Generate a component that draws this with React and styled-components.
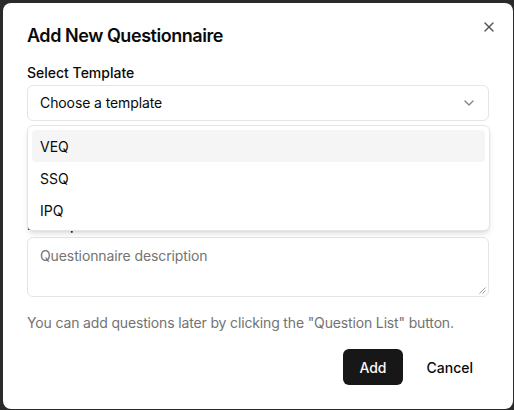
import React from "react";
import styled, { createGlobalStyle } from "styled-components";

const Global = createGlobalStyle`
  html, body { margin: 0; padding: 0; background: #2a2a2a; }
  body { font-family: Inter, "Noto Sans", sans-serif; -webkit-font-smoothing: antialiased; }
  * { box-sizing: border-box; }
`;

const Dialog = styled.div`
  position: relative;
  margin: 3px 1px 1px 3px;
  width: 510px;
  height: 406px;
  background: #ffffff;
  border-radius: 8px;
  padding: 24px;
  display: flex;
  flex-direction: column;
  color: #0a0a0a;
`;

const Title = styled.h2`
  margin: 0;
  font-size: 18px;
  line-height: 18px;
  font-weight: 600;
  letter-spacing: -0.025em;
`;

const Close = styled.button`
  position: absolute;
  top: 16px;
  right: 16px;
  width: 16px;
  height: 16px;
  padding: 0;
  border: 0;
  background: none;
  color: #0a0a0a;
  opacity: 0.7;
  display: flex;
`;

const Fields = styled.div`
  margin-top: 21px;
  display: flex;
  flex-direction: column;
  gap: 21px;
`;

const Field = styled.div`
  position: relative;
  display: flex;
  flex-direction: column;
  gap: 5px;
`;

const Label = styled.label`
  font-size: 14px;
  line-height: 14px;
  font-weight: 500;
  color: #0a0a0a;
`;

const Control = styled.div`
  height: ${(p) => p.$h || 36}px;
  border: 1px solid #e5e5e5;
  border-radius: 6px;
  display: flex;
  align-items: ${(p) => (p.$area ? "flex-start" : "center")};
  justify-content: space-between;
  padding: ${(p) => (p.$area ? "8px 12px" : "0 11px 0 12px")};
  font-size: 14px;
  line-height: 20px;
  letter-spacing: -0.1px;
  color: ${(p) => (p.$placeholder ? "#737373" : "#0a0a0a")};
  position: relative;
  background: #fff;
`;

const SelectWrap = styled.div`
  position: relative;
`;

const Menu = styled.div`
  position: absolute;
  top: calc(100% + 4px);
  left: 0;
  right: -1px;
  z-index: 5;
  background: #fff;
  border: 1px solid #e5e5e5;
  border-radius: 6px;
  padding: 4px;
  box-shadow: 0 4px 6px -1px rgba(0,0,0,0.1), 0 2px 4px -2px rgba(0,0,0,0.1);
`;

const Item = styled.div`
  height: 32px;
  display: flex;
  align-items: center;
  padding: 0 8px;
  border-radius: 4px;
  font-size: 14px;
  color: #0a0a0a;
  background: ${(p) => (p.$active ? "#f5f5f5" : "transparent")};
`;

const Resize = styled.svg`
  position: absolute;
  right: 2px;
  bottom: 2px;
`;

const Hint = styled.p`
  margin: 16px 0 0;
  font-size: 14px;
  line-height: 20px;
  letter-spacing: -0.15px;
  color: #737373;
`;

const Actions = styled.div`
  margin-top: 16px;
  display: flex;
  justify-content: flex-end;
  gap: 8px;
`;

const Button = styled.button`
  height: 36px;
  padding: 0 16px;
  border-radius: 6px;
  border: 0;
  font-family: inherit;
  font-size: 14px;
  font-weight: 500;
  background: ${(p) => (p.$primary ? "#171717" : "transparent")};
  color: ${(p) => (p.$primary ? "#fafafa" : "#0a0a0a")};
`;

const Chevron = () => (
  <svg width="16" height="16" viewBox="0 0 24 24" fill="none" stroke="#0a0a0a" strokeOpacity="0.5" strokeWidth="2" strokeLinecap="round" strokeLinejoin="round">
    <path d="m6 9 6 6 6-6" />
  </svg>
);

export default function App() {
  return (
    <>
      <Global />
      <Dialog>
        <Title>Add New Questionnaire</Title>
        <Close aria-label="Close">
          <svg width="16" height="16" viewBox="0 0 24 24" fill="none" stroke="currentColor" strokeWidth="2" strokeLinecap="round" strokeLinejoin="round">
            <path d="M18 6 6 18" />
            <path d="m6 6 12 12" />
          </svg>
        </Close>
        <Fields>
          <Field>
            <Label>Select Template</Label>
            <SelectWrap>
              <Control>
                <span>Choose a template</span>
                <Chevron />
              </Control>
              <Menu>
                <Item $active>VEQ</Item>
                <Item>SSQ</Item>
                <Item>IPQ</Item>
              </Menu>
            </SelectWrap>
          </Field>
          <Field>
            <Label>Name</Label>
            <Control $placeholder>Questionnaire name</Control>
          </Field>
          <Field>
            <Label>Description</Label>
            <Control $area $h={60} $placeholder>
              Questionnaire description
              <Resize width="7" height="7" viewBox="0 0 7 7">
                <path d="M6.5 0.5 0.5 6.5 M6.5 3.5 3.5 6.5" stroke="#8a8a8a" strokeWidth="0.9" />
              </Resize>
            </Control>
          </Field>
        </Fields>
        <Hint>You can add questions later by clicking the "Question List" button.</Hint>
        <Actions>
          <Button $primary>Add</Button>
          <Button>Cancel</Button>
        </Actions>
      </Dialog>
    </>
  );
}
